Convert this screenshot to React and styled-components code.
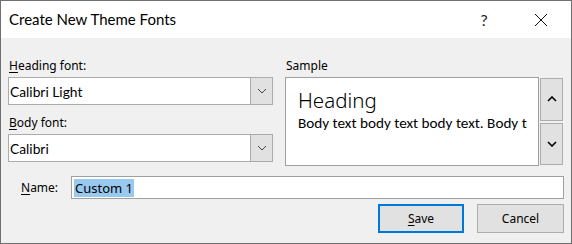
import React from "react";
import styled, { createGlobalStyle } from "styled-components";

const Global = createGlobalStyle`
  html, body { margin: 0; padding: 0; background: #f0f0f0; }
  * { box-sizing: border-box; }
`;

const ui = `"Segoe UI", "Noto Sans", "Liberation Sans", sans-serif`;
const title = `"Segoe UI", Lato, "Noto Sans", sans-serif`;
const calibri = `Carlito, Calibri, Lato, "Noto Sans", sans-serif`;
const calibriLight = `"Calibri Light", "Noto Sans", Lato, sans-serif`;

const Window = styled.div`
  width: 572px;
  height: 244px;
  border: 1px solid #6f6f6f;
  background: #f0f0f0;
  display: flex;
  flex-direction: column;
  font-family: ${ui};
  color: #000;
`;

const TitleBar = styled.div`
  height: 37px;
  background: #fff;
  display: flex;
  align-items: center;
  padding: 0 7px 0 8px;
`;

const Title = styled.div`
  font-family: ${title};
  font-size: 15px;
  flex: 1;
  padding-bottom: 1px;
`;

const CaptionButton = styled.div`
  width: 46px;
  height: 37px;
  display: flex;
  align-items: center;
  justify-content: center;
  margin-left: ${(p) => p.$gap || 0}px;
  font-family: ${title};
  font-size: 16px;
  color: #222;
  padding-left: ${(p) => p.$pl || 0}px;
`;

const Content = styled.div`
  flex: 1;
  padding: 20px 7px 0 7px;
  display: flex;
  flex-direction: column;
`;

const TopArea = styled.div`
  display: flex;
  gap: 12px;
`;

const LeftCol = styled.div`
  width: 265px;
  display: flex;
  flex-direction: column;
`;

const Label = styled.div`
  font-size: 12px;
  line-height: 16px;
  height: 16px;
  margin: ${(p) => p.$mt || 0}px 0 3px ${(p) => p.$ml || 1}px;
`;

const U = styled.span`
  text-decoration: underline;
  text-underline-offset: 2px;
`;

const Select = styled.div`
  height: 28px;
  border: 1px solid #acacac;
  background: #fff;
  display: flex;
  align-items: stretch;
`;

const SelectText = styled.div`
  flex: 1;
  font-family: ${title};
  font-size: 13.8px;
  display: flex;
  align-items: center;
  padding-left: 1px;
`;

const DropButton = styled.div`
  width: 22px;
  background: #e1e1e1;
  border-left: 1px solid #acacac;
  display: flex;
  align-items: center;
  justify-content: center;
`;

const RightCol = styled.div`
  width: 278px;
  display: flex;
  flex-direction: column;
`;

const SampleRow = styled.div`
  display: flex;
  gap: 1px;
  height: 89px;
`;

const SampleBox = styled.div`
  width: 256px;
  border: 1px solid #a0a0a0;
  background: #fff;
  padding: 8px 11px 0 12px;
  overflow: hidden;
`;

const SampleHeading = styled.div`
  font-family: ${calibriLight};
  font-weight: 300;
  font-size: 20.5px;
  line-height: 28px;
  color: #000;
`;

const SampleBody = styled.div`
  font-family: ${calibri};
  font-size: 15.2px;
  line-height: 18px;
  white-space: nowrap;
  overflow: hidden;
`;

const ScrollCol = styled.div`
  width: 23px;
  display: flex;
  flex-direction: column;
  gap: 2px;
  padding: 1px 0 1px 0;
`;

const ScrollButton = styled.div`
  flex: 1;
  background: #e1e1e1;
  border: 1px solid #adadad;
  display: flex;
  align-items: center;
  justify-content: center;
`;

const NameRow = styled.div`
  display: flex;
  align-items: center;
  margin-top: 10px;
  padding-left: 13px;
`;

const NameLabel = styled.div`
  font-size: 12px;
  width: 50px;
`;

const NameInput = styled.div`
  flex: 1;
  height: 23px;
  border: 1px solid #a0a0a0;
  background: #fff;
  display: flex;
  align-items: center;
  padding-left: 2px;
`;

const Selected = styled.span`
  background: #99c9ef;
  font-size: 13px;
  line-height: 18px;
  padding: 0 1px;
`;

const ButtonRow = styled.div`
  display: flex;
  justify-content: flex-end;
  gap: 13px;
  margin-top: 5px;
`;

const Button = styled.div`
  width: ${(p) => p.$w}px;
  height: 29px;
  background: #e1e1e1;
  border: ${(p) => (p.$default ? "2px solid #0078d7" : "1px solid #adadad")};
  display: flex;
  align-items: center;
  justify-content: center;
  font-size: 12px;
`;

const Chevron = ({ up, size = 9, sw = 1, color = "#000" }) => (
  <svg width={size + 2} height={size / 2 + 2} viewBox={`0 0 ${size + 2} ${size / 2 + 2}`}>
    <polyline
      points={
        up
          ? `1,${size / 2 + 1} ${size / 2 + 1},1 ${size + 1},${size / 2 + 1}`
          : `1,1 ${size / 2 + 1},${size / 2 + 1} ${size + 1},1`
      }
      fill="none"
      stroke={color}
      strokeWidth={sw}
    />
  </svg>
);

export default function App() {
  return (
    <>
      <Global />
      <Window>
        <TitleBar>
          <Title>Create New Theme Fonts</Title>
          <CaptionButton $pl={2}>?</CaptionButton>
          <CaptionButton $gap={12}>
            <svg width="14" height="14" viewBox="0 0 14 14">
              <path d="M1 1 L13 13 M13 1 L1 13" stroke="#111" strokeWidth="1" fill="none" />
            </svg>
          </CaptionButton>
        </TitleBar>
        <Content>
          <TopArea>
            <LeftCol>
              <Label>
                <U>H</U>eading font:
              </Label>
              <Select>
                <SelectText>Calibri Light</SelectText>
                <DropButton>
                  <Chevron size={8} sw={1} color="#444" />
                </DropButton>
              </Select>
              <Label $mt={10}>
                <U>B</U>ody font:
              </Label>
              <Select>
                <SelectText>Calibri</SelectText>
                <DropButton>
                  <Chevron size={8} sw={1} color="#444" />
                </DropButton>
              </Select>
            </LeftCol>
            <RightCol>
              <Label $ml={1}>Sample</Label>
              <SampleRow>
                <SampleBox>
                  <SampleHeading>Heading</SampleHeading>
                  <SampleBody>Body text body text body text. Body text</SampleBody>
                </SampleBox>
                <ScrollCol>
                  <ScrollButton>
                    <Chevron up size={8} sw={1.6} />
                  </ScrollButton>
                  <ScrollButton>
                    <Chevron size={8} sw={1.6} />
                  </ScrollButton>
                </ScrollCol>
              </SampleRow>
            </RightCol>
          </TopArea>
          <NameRow>
            <NameLabel>
              <U>N</U>ame:
            </NameLabel>
            <NameInput>
              <Selected>Custom 1</Selected>
            </NameInput>
          </NameRow>
          <ButtonRow>
            <Button $w={86} $default>
              <span>
                <U>S</U>ave
              </span>
            </Button>
            <Button $w={87}>Cancel</Button>
          </ButtonRow>
        </Content>
      </Window>
    </>
  );
}
